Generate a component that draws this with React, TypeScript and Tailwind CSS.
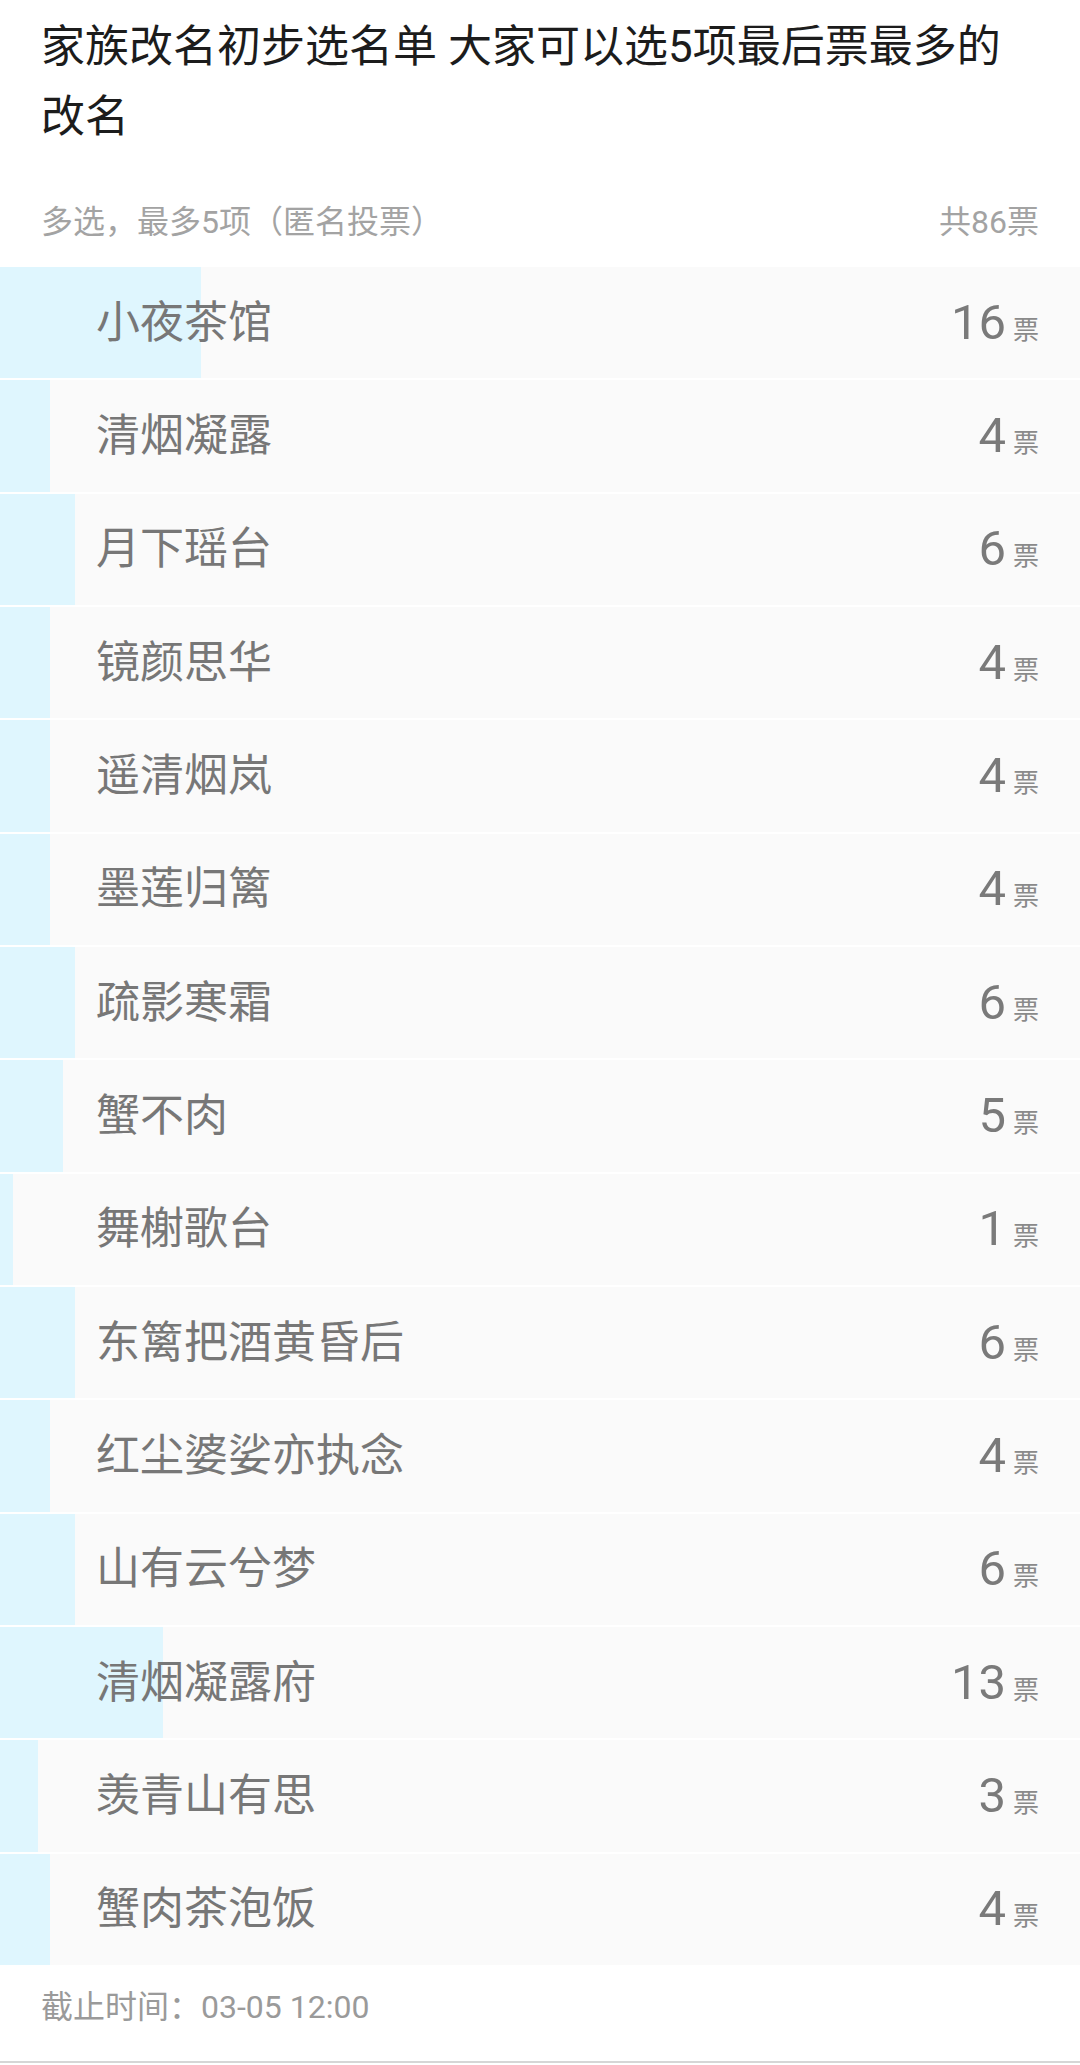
import React from "react";

const items: { name: string; votes: number }[] = [
  { name: "小夜茶馆", votes: 16 },
  { name: "清烟凝露", votes: 4 },
  { name: "月下瑶台", votes: 6 },
  { name: "镜颜思华", votes: 4 },
  { name: "遥清烟岚", votes: 4 },
  { name: "墨莲归篱", votes: 4 },
  { name: "疏影寒霜", votes: 6 },
  { name: "蟹不肉", votes: 5 },
  { name: "舞榭歌台", votes: 1 },
  { name: "东篱把酒黄昏后", votes: 6 },
  { name: "红尘婆娑亦执念", votes: 4 },
  { name: "山有云兮梦", votes: 6 },
  { name: "清烟凝露府", votes: 13 },
  { name: "羡青山有思", votes: 3 },
  { name: "蟹肉茶泡饭", votes: 4 },
];

const total = 86;

export default function App() {
  return (
    <div
      className="w-[1080px] min-h-[2065px] bg-white flex flex-col"
      style={{ fontFamily: "Roboto, 'Noto Sans CJK SC', 'Noto Sans', sans-serif" }}
    >
      <div className="px-[41px] pt-[12px] text-[44px] leading-[70px] text-[#1c1c1c]">
        家族改名初步选名单 大家可以选5项最后票最多的改名
      </div>
      <div className="mt-[46px] mb-[21px] px-[41px] flex justify-between text-[32px] leading-[48px] text-[#a3a3a3]">
        <span>多选，最多5项（匿名投票）</span>
        <span>共86票</span>
      </div>
      <div className="flex flex-col gap-[2px]">
        {items.map((it, i) => (
          <div key={i} className="relative h-[111.33px] bg-[#fafafa] flex items-center">
            <div
              className="absolute left-0 top-0 bottom-0 bg-[#dff6fe]"
              style={{ width: `${(it.votes / total) * 100}%` }}
            />
            <div className="relative flex-1 pl-[96px] text-[44px] leading-[60px] text-[#777777]">
              {it.name}
            </div>
            <div className="relative pr-[41px] flex items-baseline text-[#7a7a7a]">
              <span className="text-[49px] leading-[60px]">{it.votes}</span>
              <span className="ml-[7px] text-[26px] leading-[30px] text-[#8a8a8a]">票</span>
            </div>
          </div>
        ))}
      </div>
      <div className="h-[96px] px-[41px] pt-[18px] text-[32px] leading-[48px] text-[#9a9a9a]">
        截止时间：03-05 12:00
      </div>
      <div className="h-[2px] bg-[#d6d6d6]" />
    </div>
  );
}
